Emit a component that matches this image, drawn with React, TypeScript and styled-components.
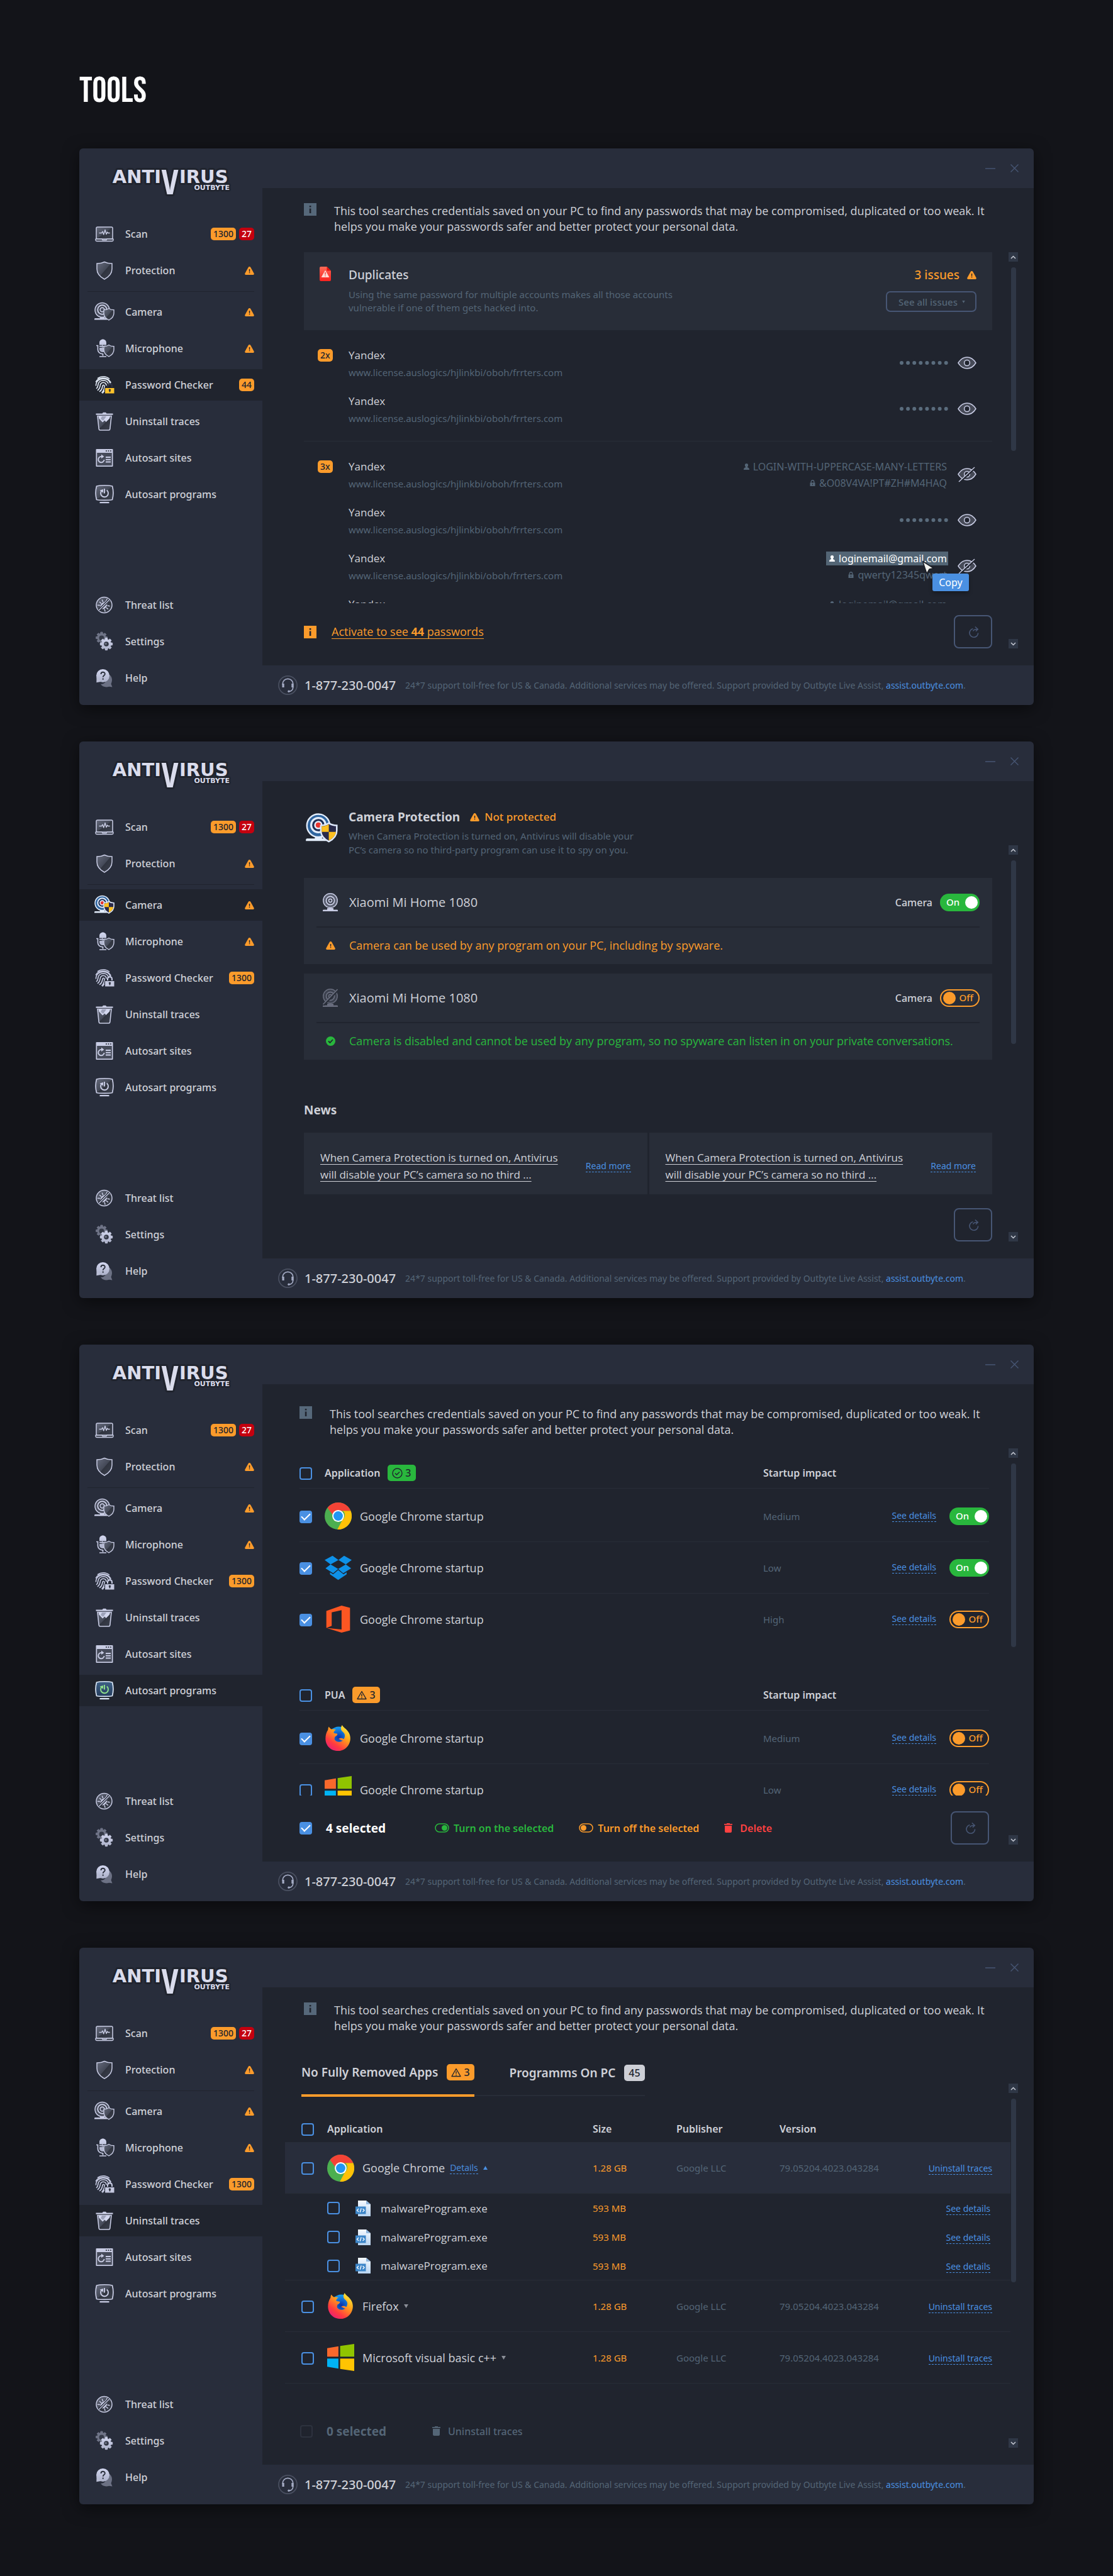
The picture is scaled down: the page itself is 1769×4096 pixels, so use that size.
import React, { useState } from "react";
import styled, { createGlobalStyle, css } from "styled-components";

const color = {
  page: "#131419",
  panel: "#282d3b",
  card: "#282d38",
  deep: "#20242e",
  text: "#cfd1d8",
  muted: "#546576",
  outline: "#475674",
  blue: "#4a90e2",
  orange: "#fb9b2b",
  green: "#29b73d",
  red: "#ff4141",
  light: "#c8cce4",
  scroll: "#2f3746",
};

const openSans = `"Open Sans", "Noto Sans", sans-serif`;

const GlobalStyle = createGlobalStyle`
  * { box-sizing: border-box; }
  body { margin: 0; background: ${color.page}; }
  button, input, table { font: inherit; color: inherit; }
  a { color: inherit; text-decoration: none; }
  svg { display: block; flex: none; }
`;

/* ---------- page and window frame ---------- */

const Page = styled.main`
  padding: 115px 126px 114px;
  color: ${color.text};
  font-family: "Noto Sans", "Open Sans", sans-serif;
  font-size: 16px;
`;

const PageTitle = styled.h1`
  margin: 0 0 61px;
  font: 400 57px/60px "Bebas Neue", "Open Sans Condensed", "Roboto Condensed", sans-serif;
  color: #fff;
`;

const WindowList = styled.div`
  display: flex;
  flex-direction: column;
  gap: 74px;
`;

const WindowPair = styled.div`
  display: flex;
  flex-direction: column;
  gap: 58px;
`;

const AppWindow = styled.section`
  display: grid;
  grid-template-columns: 291px minmax(0, 1fr);
  min-height: 885px;
  border-radius: 6px;
  overflow: hidden;
  background: ${color.panel};
  box-shadow: 0 6px 26px rgba(0, 0, 0, 0.5);
`;

const Sidebar = styled.aside`
  display: flex;
  flex-direction: column;
  padding-bottom: 18px;
`;

const LogoBox = styled.div`
  height: 111px;
  padding: 30px 0 0 46px;
`;

const Nav = styled.nav<{ $bottom?: boolean }>`
  display: flex;
  flex-direction: column;
  gap: 8px;
  margin-top: ${(p) => (p.$bottom ? "auto" : "0")};
`;

const NavLink = styled.a<{ $active: boolean }>`
  display: grid;
  grid-template-columns: 36px 1fr auto;
  column-gap: 15px;
  align-items: center;
  height: 50px;
  padding: 0 13px 0 22px;
  font-size: 16px;
  font-weight: 500;
  background: ${(p) => (p.$active ? color.deep : "transparent")};
`;

const NavRule = styled.hr`
  width: calc(100% - 26px);
  height: 1px;
  margin: 0 13px -1px;
  border: 0;
  background: ${color.deep};
`;

const BadgeRow = styled.span`
  display: flex;
  gap: 5px;
`;

const Badge = styled.span<{ $tone?: "orange" | "red" | "green" | "grey"; $large?: boolean }>`
  display: inline-flex;
  align-items: center;
  gap: 4px;
  height: ${(p) => (p.$large ? 26 : 20)}px;
  padding: 0 ${(p) => (p.$large ? 7 : 4)}px;
  border-radius: 5px;
  font-size: ${(p) => (p.$large ? 16 : 14)}px;
  font-weight: 500;
  line-height: 1;
  color: ${(p) => (p.$tone === "red" ? "#fff" : color.deep)};
  background: ${(p) =>
    ({ orange: color.orange, red: "#c4000f", green: color.green, grey: "#cdcfd6" })[p.$tone ?? "orange"]};
`;

const Main = styled.div`
  display: grid;
  grid-template-rows: 63px 1fr 63px;
`;

const TitleBar = styled.header`
  display: flex;
  justify-content: flex-end;
  align-items: center;
  gap: 18px;
  padding-right: 21px;
`;

const PlainButton = styled.button`
  display: inline-flex;
  align-items: center;
  padding: 0;
  border: 0;
  background: none;
  cursor: pointer;
`;

const TitleButton = styled(PlainButton)`
  width: 20px;
  height: 20px;
  justify-content: center;
`;

const Body = styled.div<{ $top?: number; $left?: number; $right?: number }>`
  display: flex;
  gap: ${(p) => (p.$right ?? 66) - 40}px;
  padding: ${(p) => p.$top ?? 24}px 25px 27px ${(p) => p.$left ?? 66}px;
  background: ${color.deep};
`;

const Column = styled.div`
  display: flex;
  flex-direction: column;
  flex: 1;
  min-width: 0;
`;

const Footer = styled.footer`
  display: flex;
  align-items: center;
  padding-left: 25px;
  font-size: 14px;
  color: ${color.muted};
`;

const Phone = styled.strong`
  margin: 0 15px 0 11px;
  font-size: 20px;
  font-weight: 500;
  color: ${color.text};
`;

const FooterLink = styled.a`
  color: ${color.blue};
`;

/* ---------- scrollbar ---------- */

const Scroll = styled.div<{ $top: number }>`
  display: flex;
  flex-direction: column;
  align-items: center;
  width: 15px;
  margin-top: ${(p) => p.$top}px;
`;

const ScrollButton = styled(PlainButton)`
  width: 15px;
  height: 15px;
  justify-content: center;
  background: ${color.scroll};
`;

const Thumb = styled.div`
  width: 8px;
  height: 292px;
  margin: 9px 0 auto;
  border-radius: 4px;
  background: ${color.scroll};
`;

/* ---------- shared content parts ---------- */

const InfoRow = styled.div<{ $gap: number }>`
  display: flex;
  align-items: flex-start;
  gap: 28px;
  margin-bottom: ${(p) => p.$gap}px;
`;

const InfoText = styled.p`
  flex: 1;
  margin: 0;
  font-family: ${openSans};
  font-size: 18px;
  line-height: 25px;
`;

const Viewport = styled.div<{ $height: number }>`
  height: ${(p) => p.$height}px;
  overflow: hidden;
`;

const BottomBar = styled.div<{ $outdent?: boolean }>`
  display: flex;
  align-items: center;
  height: 53px;
  margin-top: auto;
  margin-left: ${(p) => (p.$outdent ? "-6px" : "0")};
`;

const RefreshButton = styled(PlainButton)`
  width: 61px;
  height: 53px;
  margin-left: auto;
  justify-content: center;
  border: 2px solid ${color.outline};
  border-radius: 8px;
`;

const DashedLink = styled.a`
  display: inline-block;
  font-size: 14px;
  line-height: 18px;
  white-space: nowrap;
  color: ${color.blue};
  border-bottom: 1px dashed ${color.blue};
`;

const Check = styled.input`
  appearance: none;
  display: inline-grid;
  place-items: center;
  flex: none;
  width: 20px;
  height: 20px;
  margin: 0;
  border: 2px solid ${color.blue};
  border-radius: 4px;
  vertical-align: middle;

  &:checked {
    background: ${color.blue};
  }
  &:checked::after {
    content: "";
    width: 12px;
    height: 6px;
    margin-bottom: 4px;
    border: solid #fff;
    border-width: 0 0 2px 2px;
    rotate: -45deg;
  }
  &:disabled {
    border-color: #2d323e;
  }
`;

const SwitchLabel = styled.label`
  position: relative;
  display: inline-flex;
  align-items: center;
  gap: 12px;
  font-weight: 500;
`;

const HiddenInput = styled.input`
  position: absolute;
  right: 0;
  width: 63px;
  height: 28px;
  margin: 0;
  opacity: 0;
`;

const Track = styled.span<{ $on: boolean }>`
  display: inline-flex;
  align-items: center;
  justify-content: space-between;
  width: 63px;
  height: 28px;
  padding: 0 3px 0 10px;
  border-radius: 14px;
  font-size: 15px;
  font-weight: 500;
  line-height: 1;
  ${(p) =>
    p.$on
      ? css`
          color: #fff;
          background: ${color.green};
        `
      : css`
          flex-direction: row-reverse;
          padding: 0 8px 0 3px;
          color: ${color.orange};
          border: 2px solid ${color.orange};
        `}
`;

const Knob = styled.span`
  width: 20px;
  height: 20px;
  border-radius: 50%;
  background: currentColor;
`;

/* ---------- password checker ---------- */

const SummaryCard = styled.section`
  display: flex;
  height: 124px;
  padding: 23px 25px 0;
  background: ${color.card};
`;

const SummaryText = styled.div`
  flex: 1;
  margin-left: 28px;
`;

const SummaryTitle = styled.h2`
  margin: 0 0 8px;
  font-size: 19px;
  font-weight: 500;
  line-height: 26px;
`;

const Description = styled.p`
  max-width: 560px;
  margin: 0;
  font-size: 15px;
  line-height: 21px;
  color: ${color.muted};
`;

const SummarySide = styled.div`
  display: flex;
  flex-direction: column;
  align-items: flex-end;
  gap: 13px;
`;

const IssueCount = styled.div`
  display: flex;
  align-items: center;
  gap: 12px;
  font-size: 19px;
  font-weight: 500;
  line-height: 26px;
  color: ${color.orange};
`;

const OutlineButton = styled(PlainButton)`
  gap: 7px;
  height: 33px;
  padding: 0 16px 0 18px;
  border: 2px solid ${color.outline};
  border-radius: 7px;
  font-size: 15px;
  font-weight: 500;
  color: ${color.muted};
`;

const AccountGroup = styled.ul`
  display: flex;
  flex-direction: column;
  gap: 24px;
  margin: 0;
  padding: 28px 25px 26px 22px;
  list-style: none;

  & + & {
    border-top: 1px solid ${color.card};
  }
`;

const Account = styled.li`
  display: grid;
  grid-template-columns: 49px 1fr auto 30px;
  align-items: center;
  height: 49px;
`;

const AccountBadge = styled.span`
  align-self: start;
  padding-top: 2px;
  line-height: 0;
`;

const AccountName = styled.div`
  font-family: ${openSans};
  font-size: 17px;
  line-height: 24px;
`;

const AccountUrl = styled.div`
  margin-top: 5px;
  font-size: 15px;
  line-height: 20px;
  color: ${color.muted};
`;

const Credentials = styled.div`
  display: flex;
  flex-direction: column;
  align-items: flex-end;
  gap: 4px;
  margin-right: 15px;
  font-size: 16px;
  color: ${color.muted};
`;

const Credential = styled.span<{ $selected?: boolean }>`
  position: relative;
  display: flex;
  align-items: center;
  gap: 6px;
  height: 22px;
  padding: 0 2px 0 5px;
  color: ${(p) => (p.$selected ? "#fff" : "inherit")};
  background: ${(p) => (p.$selected ? "#536575" : "none")};
`;

const Pointer = styled.span`
  position: absolute;
  top: 14px;
  right: 21px;
  z-index: 2;
`;

const Tooltip = styled.span`
  position: absolute;
  top: 35px;
  right: -33px;
  z-index: 1;
  width: 58px;
  border-radius: 3px;
  font-size: 16px;
  line-height: 28px;
  text-align: center;
  color: #fff;
  background: ${color.blue};
  box-shadow: 0 3px 6px rgba(0, 0, 0, 0.3);
`;

const ActivateLink = styled.a`
  margin-left: 24px;
  font-family: ${openSans};
  font-size: 18px;
  line-height: 22px;
  color: ${color.orange};
  border-bottom: 1px solid ${color.orange};
`;

/* ---------- camera ---------- */

const CameraHead = styled.div`
  display: flex;
  gap: 14px;
  margin-bottom: 34px;
`;

const CameraIconBox = styled.div`
  width: 57px;
  padding-top: 3px;
`;

const HeadLine = styled.div`
  display: flex;
  align-items: center;
  gap: 16px;
  margin-bottom: 6px;
`;

const HeadTitle = styled.h2`
  margin: 0;
  font-size: 19px;
  font-weight: 700;
  line-height: 26px;
`;

const HeadStatus = styled.span`
  display: flex;
  align-items: center;
  gap: 8px;
  font-size: 17px;
  font-weight: 500;
  line-height: 26px;
  color: ${color.orange};
`;

const HeadText = styled(Description)`
  max-width: 470px;
  line-height: 22px;
`;

const DeviceCard = styled.section`
  padding: 0 20px;
  background: ${color.card};

  & + & {
    margin-top: 15px;
  }
`;

const DeviceRow = styled.div<{ $tone?: string }>`
  display: grid;
  grid-template-columns: 24px 1fr auto;
  column-gap: 18px;
  align-items: center;
  justify-items: start;
  height: ${(p) => (p.$tone ? 60 : 77)}px;
  padding-left: 10px;
  padding-bottom: ${(p) => (p.$tone ? "2px" : "0")};
  font-family: ${openSans};
  font-size: 18px;
  color: ${(p) => p.$tone ?? color.text};
  border-top: ${(p) => (p.$tone ? `2px solid ${color.deep}` : "0")};
`;

const DeviceIcon = styled.span`
  justify-self: center;
`;

const DeviceName = styled.h3`
  margin: 0;
  font-size: 20px;
  font-weight: 400;
`;

const DeviceSwitch = styled.div`
  font-family: "Noto Sans", "Open Sans", sans-serif;
  font-size: 16px;
`;

const NewsTitle = styled.h2`
  margin: 67px 0 23px;
  font-size: 19px;
  font-weight: 700;
  line-height: 26px;
`;

const NewsGrid = styled.div`
  display: grid;
  grid-template-columns: 1fr 1fr;
  gap: 3px;
`;

const NewsCard = styled.article`
  display: flex;
  align-items: center;
  justify-content: space-between;
  padding: 26px 26px 18px;
  background: ${color.card};
`;

const NewsText = styled.a`
  max-width: 390px;
  font-family: ${openSans};
  font-size: 17px;
  line-height: 27px;
  text-decoration: underline;
  text-decoration-thickness: 1px;
  text-underline-offset: 4px;
`;

/* ---------- tables ---------- */

const Table = styled.table`
  width: 100%;
  table-layout: fixed;
  border-spacing: 0;
  text-align: left;

  & + & {
    margin-top: 55px;
  }
  th {
    height: 49px;
    padding: 0;
    font-weight: 600;
    border-bottom: 1px solid #282d38;
  }
  td {
    height: 82px;
    padding: 0;
    border-bottom: 1px solid #282d38;
  }
`;

const StartupTable = styled(Table)`
  tbody tr:first-child td {
    height: 85px;
    padding-top: 3px;
  }
  tbody tr:last-child td {
    border-bottom-color: transparent;
  }
`;

const TraceTable = styled(Table)`
  th {
    height: 43px;
  }
  th:first-child,
  td:first-child {
    padding-left: 26px;
  }
  td:last-child {
    padding-right: 29px;
    text-align: right;
  }
`;

const TraceWrap = styled.div`
  margin: 30px -29px 0 -30px;
`;

const TraceRow = styled.tr<{ $kind?: "open" | "child" | "lastChild" }>`
  td {
    ${(p) => p.$kind === "open" && `height: 81px; background: ${color.panel};`}
    ${(p) => (p.$kind === "child" || p.$kind === "lastChild") && "height: 46px;"}
    ${(p) => p.$kind === "child" && "border-bottom: 0;"}
  }
  td:last-child {
    ${(p) => (p.$kind === "child" || p.$kind === "lastChild") && "padding-right: 32px;"}
  }
`;

const Col = styled.col<{ $w?: number }>`
  width: ${(p) => (p.$w ? `${p.$w}px` : "auto")};
`;

const HeadCell = styled.span`
  display: flex;
  align-items: center;
  gap: 12px;
`;

const AppCell = styled.span<{ $gap?: number }>`
  display: flex;
  align-items: center;
  gap: ${(p) => p.$gap ?? 13}px;
  font-family: ${openSans};
  font-size: 18px;
`;

const ChildName = styled(AppCell)`
  font-size: 17px;
`;

const NameGroup = styled.span`
  display: flex;
  align-items: center;
  gap: 8px;
`;

const DetailCell = styled.td<{ $tone?: string }>`
  font-size: 15px;
  color: ${(p) => p.$tone ?? color.muted};
`;

const Actions = styled.span`
  display: flex;
  align-items: center;
  justify-content: flex-end;
  gap: 21px;
`;

const SelectedCount = styled.label<{ $muted?: boolean }>`
  display: flex;
  align-items: center;
  gap: 22px;
  width: ${(p) => (p.$muted ? 210 : 175)}px;
  font-size: 19px;
  font-weight: 700;
  color: ${(p) => (p.$muted ? color.muted : "#fff")};
`;

const ActionGroup = styled.div`
  display: flex;
  gap: 40px;
  padding-left: 40px;
`;

const BulkAction = styled(PlainButton)<{ $tone: string; $wide?: boolean }>`
  gap: ${(p) => (p.$wide ? 12 : 7)}px;
  font-size: 16px;
  font-weight: 600;
  color: ${(p) => p.$tone};
`;

const MutedAction = styled(BulkAction)`
  font-weight: 500;
`;

const Tabs = styled.div`
  display: flex;
  align-items: flex-start;
  margin-left: -4px;
`;

const Tab = styled(PlainButton)<{ $active?: boolean }>`
  gap: 14px;
  height: ${(p) => (p.$active ? 52 : 51)}px;
  padding: 0 0 22px ${(p) => (p.$active ? 0 : 56)}px;
  border-bottom: ${(p) => (p.$active ? `4px solid ${color.orange}` : `2px solid ${color.card}`)};
  font-size: 19px;
  font-weight: 600;
`;

/* ---------- icons ---------- */

const HiddenDefs = styled.svg`
  position: absolute;
  width: 0;
  height: 0;
`;

function Gradients() {
  return (
    <HiddenDefs aria-hidden="true">
      <defs>
        <linearGradient id="glass" x1="0" y1="0" x2="1" y2="1">
          <stop offset="0" stopColor="#666b7d" />
          <stop offset="0.5" stopColor="#444957" />
          <stop offset="0.52" stopColor="#30343f" />
          <stop offset="1" stopColor="#3d424f" />
        </linearGradient>
        <linearGradient id="silver" x1="0" y1="0" x2="0" y2="1">
          <stop offset="0" stopColor="#d3d7f0" />
          <stop offset="1" stopColor="#abb0c8" />
        </linearGradient>
        <linearGradient id="blueGlass" x1="0" y1="0" x2="0" y2="1">
          <stop offset="0" stopColor="#3f6187" />
          <stop offset="1" stopColor="#243c5c" />
        </linearGradient>
        <linearGradient id="redDoc" x1="0" y1="0" x2="0" y2="1">
          <stop offset="0" stopColor="#ff6b57" />
          <stop offset="1" stopColor="#f9221f" />
        </linearGradient>
        <linearGradient id="page" x1="0" y1="0" x2="0" y2="1">
          <stop offset="0" stopColor="#f4f9ff" />
          <stop offset="1" stopColor="#b9d4f0" />
        </linearGradient>
        <linearGradient id="fox" x1="0.8" y1="0" x2="0.1" y2="1">
          <stop offset="0" stopColor="#fff13d" />
          <stop offset="0.35" stopColor="#ffa21a" />
          <stop offset="0.7" stopColor="#ff3b3f" />
          <stop offset="1" stopColor="#e31587" />
        </linearGradient>
        <radialGradient id="globe">
          <stop offset="0" stopColor="#0a2fa8" />
          <stop offset="1" stopColor="#15a0f5" />
        </radialGradient>
      </defs>
    </HiddenDefs>
  );
}

const Logo = () => (
  <svg width="204" height="66" viewBox="-5 -5 204 66" overflow="visible" role="img" aria-label="Antivirus Outbyte">
    <g fill="#dadcec" stroke={color.deep} strokeWidth="6" strokeLinejoin="round" paintOrder="stroke" fontWeight="700">
      <text x="188" y="31" textAnchor="end" fontFamily="DejaVu Sans, sans-serif" fontSize="11" strokeWidth="5">OUTBYTE</text>
      <text x="79" y="20" textAnchor="end" fontFamily="DejaVu Sans, sans-serif" fontSize="29">ANTI</text>
      <text x="108" y="20" fontFamily="DejaVu Sans, sans-serif" fontSize="29">IRUS</text>
      <text x="93" y="38" textAnchor="middle" fontFamily="Open Sans Condensed, Roboto Condensed, sans-serif" fontSize="53">V</text>
    </g>
  </svg>
);

const Warn = ({ size = 15 }: { size?: number }) => (
  <svg width={size} height={size} viewBox="0 0 16 16" aria-hidden="true">
    <path d="M8 1c.9 0 1.500.500 1.900 1.200l5.600 10c.7 1.300 0 2.600-1.500 2.600H2c-1.500 0-2.200-1.300-1.500-2.600l5.600-10C6.500 1.500 7.100 1 8 1z" fill={color.orange} />
    <path d="M7.200 5.200h1.700l-.2 4.300H7.400zM7.300 10.500h1.500v1.600H7.300z" fill={color.deep} />
  </svg>
);

const WarnOutline = () => (
  <svg width="16" height="15" viewBox="0 0 16 15" fill="none" stroke={color.deep} strokeWidth="1.400" strokeLinejoin="round" aria-hidden="true">
    <path d="M8 1.500 15 13.500H1zM8 5.500v4M8 10.800v1.400" />
  </svg>
);

const CheckRing = () => (
  <svg width="17" height="17" viewBox="0 0 17 17" fill="none" stroke={color.deep} strokeWidth="1.400" aria-hidden="true">
    <circle cx="8.500" cy="8.500" r="7.500" />
    <path d="m5 8.500 2.500 2.500L12 6.500" />
  </svg>
);

const InfoMark = ({ tone }: { tone: string }) => (
  <svg width="20" height="20" viewBox="0 0 20 20" aria-hidden="true">
    <path fill={tone} d="M0 0h20v20H0z" />
    <path fill={color.deep} d="M8.800 4h2.600v2.600H8.800zM8.800 8.400h2.600V16H8.800z" />
  </svg>
);

const smallShield = "M25 12.500c2.500 1.800 5 2.300 8 2.300v5.200c0 5-3.200 8.500-8 11-4.800-2.500-8-6-8-11v-5.200c3 0 5.500-.5 8-2.300z";

const SmallShield = ({ active }: { active?: boolean }) =>
  active ? (
    <>
      <path d={smallShield} fill="#2a2b4a" stroke="#dfe9fb" strokeWidth="1.600" />
      <path d="M25 13.500v7.800h-7.200v-5.600c2.800-.1 5-.7 7.200-2.200zM25 21.300h7.200c-.5 3.700-3 6.500-7.200 8.700z" fill="#fdc021" />
    </>
  ) : (
    <path d={smallShield} fill="url(#glass)" stroke={color.light} strokeWidth="1.400" />
  );

function CameraIcon({ active, size = 36 }: { active?: boolean; size?: number }) {
  const ring = active ? "#e3edfb" : color.light;
  const disc = active ? "#2f659f" : "#4a4f5f";
  return (
    <svg width={size} height={size} viewBox="0 0 36 36" aria-hidden="true">
      <path d="M2 30.500v-1.300c0-1 1-1.200 2-1.200h7v-2.500h8l-1 2.500h3l1.500 2.500z" fill={ring} />
      <circle cx="14.500" cy="15" r="11.500" fill={disc} stroke={ring} strokeWidth="1.500" />
      <circle cx="14.500" cy="14.500" r="7.200" fill={active ? "#1e2f55" : "#343945"} stroke={ring} strokeWidth="2" />
      <circle cx="14.500" cy="14.500" r="3.400" fill={active ? "#e8352f" : "#4a4f5f"} stroke={ring} strokeWidth="1.600" />
      <SmallShield active={active} />
    </svg>
  );
}

const ScanIcon = () => (
  <svg width="36" height="36" viewBox="0 0 36 36" aria-hidden="true">
    <rect x="5" y="7" width="26" height="19" rx="2" fill="url(#glass)" stroke={color.light} strokeWidth="1.500" />
    <path d="M4 26h10l1 1.600h6l1-1.600h10v1.800q0 1.700-1.800 1.700H5.800Q4 29.500 4 27.800z" fill="#3b404d" stroke={color.light} strokeWidth="1.400" strokeLinejoin="round" />
    <path d="M9.500 16.500h4l1.500-2.500 1.800 5 2.200-7.500 2 7 1.500-3.500 1.200 1.500h3" fill="none" stroke={color.light} strokeWidth="1.400" strokeLinejoin="round" />
  </svg>
);

const ShieldIcon = () => (
  <svg width="36" height="36" viewBox="0 0 36 36" aria-hidden="true">
    <path d="M18 4.500c4 2 8 2.600 12 2.600v8.400C30 23 25.500 28 18 32 10.500 28 6 23 6 15.500V7.100c4 0 8-.6 12-2.600z" fill="url(#glass)" stroke={color.light} strokeWidth="1.500" />
  </svg>
);

const MicIcon = () => (
  <svg width="36" height="36" viewBox="0 0 36 36" aria-hidden="true">
    <path d="M10 12.500V9c0-3.200 2.500-5.500 5.500-5.500S21 5.800 21 9v3.500h-6v1.200h6v2h-6V17h6v2.500c0 2.500-2.500 4.500-5.500 4.500S10 22 10 19.500V17h4v-1.300h-4v-2h4v-1.200z" fill="url(#silver)" />
    <path d="M5 13.500h2.500V20c0 4 3.500 6.800 8 6.800v3M10 31h11" fill="none" stroke={color.light} strokeWidth="1.700" />
    <SmallShield />
  </svg>
);

function PasswordIcon({ active }: { active?: boolean }) {
  return (
    <svg width="36" height="36" viewBox="0 0 36 36" fill="none" strokeLinecap="round" aria-hidden="true">
      <g stroke={active ? "#e4ecf8" : color.light} strokeWidth="1.600">
        <path d="M7.500 7.500C12.500 3.800 20 3.600 25.500 8" />
        <path d="M4.500 13C9 5.500 22.500 4.500 28 14" />
        <path d="M4.500 19c0-13.500 21-14.500 23-2.500" />
        <path d="M5.500 23.500C8 21 7.500 19.500 8 17c1.500-8 15-8.500 16.500.5" />
        <path d="M7.500 26.500c4-3 3.200-6 4-8.700 1.500-4.800 8.500-4.800 9.500.7" />
        <path d="M10.500 28.500c4.500-3 3.800-6 4.500-9 .6-1.800 3-1.500 3 .5 0 3.500-.5 7-4 10" />
        <path d="M17.500 27.500c-.8 1.500-1.500 2.500-2.500 3.500" />
      </g>
      <path d="M23 22.500v-2.800c0-4.500 7-4.500 7 0v2.800" stroke={active ? "#2e3344" : color.light} strokeWidth="2" />
      <path d="M19 22.500h15v9.500H19z" fill={active ? "#fcc32b" : "#c4c8df"} stroke={active ? color.deep : color.panel} strokeWidth="1" />
      <path d="M26.500 25.500v3M25.700 26h1.600" stroke="#262a37" strokeWidth="2" />
    </svg>
  );
}

const TrashIcon = () => (
  <svg width="36" height="36" viewBox="0 0 36 36" aria-hidden="true">
    <path d="M7 9.500h22l-2.200 20.700q-.2 1.800-2 1.800H11.200q-1.800 0-2-1.800z" fill="url(#glass)" stroke={color.light} strokeWidth="1.600" />
    <path d="M9 10h18l-1 3.500-5.500 5.500-2-2.500-3.500 3-6-6.500z" fill="#d3d7ee" />
    <path d="m14 10-2 4 4 3 5-7z" fill="#9ea3ba" />
    <path d="M4.500 5.500h10l1.500-1.700h4l1.500 1.700h10v2.300h-27z" fill={color.light} />
  </svg>
);

const SitesIcon = () => (
  <svg width="36" height="36" viewBox="0 0 36 36" aria-hidden="true">
    <rect x="4.500" y="4" width="27" height="28" rx="1" fill={color.light} />
    <path d="M6.200 10h23.600v20.300H6.200z" fill="#464b5a" />
    <circle cx="21" cy="7" r="1.100" fill="#2b303d" />
    <circle cx="24.500" cy="7" r="1.100" fill="#2b303d" />
    <circle cx="28" cy="7" r="1.100" fill="#2b303d" />
    <path d="M14.500 16.200A4.700 4.700 0 1 0 17.600 21M20 17h8M20 20.800h8M20 24.500h8" fill="none" stroke={color.light} strokeWidth="1.900" />
    <path d="m13 12.500 4.500 3.500-4.500 3z" fill={color.light} />
  </svg>
);

function ProgramsIcon({ active }: { active?: boolean }) {
  const line = active ? "#dbe7f7" : color.light;
  return (
    <svg width="36" height="36" viewBox="0 0 36 36" aria-hidden="true">
      <path d="M5.500 5c6-1.700 19-1.700 25 0 1.600 6 1.600 15.500 0 21.500-6 1.200-19 1.200-25 0C3.900 20.500 3.900 11 5.500 5z" fill={active ? "url(#blueGlass)" : "url(#glass)"} stroke={line} strokeWidth="1.700" strokeLinejoin="round" />
      <path d="M18 9v7.500M21.800 11.600a6 6 0 1 1-7.800.2" fill="none" stroke={active ? "#8fe08c" : line} strokeWidth="1.900" />
      <path d="m10.500 11.500 5.500-1.500v5.500z" fill={active ? "#8fe08c" : line} />
      <path d="M10.500 30h15v2.200h-15z" fill={line} />
    </svg>
  );
}

const ThreatIcon = () => (
  <svg width="36" height="36" viewBox="0 0 36 36" fill="none" aria-hidden="true">
    <circle cx="17.500" cy="18" r="12.500" fill="url(#glass)" stroke={color.light} strokeWidth="1.500" />
    <g transform="rotate(40 17.500 18)">
      <ellipse cx="17.500" cy="19" rx="4.600" ry="6.500" fill={color.light} />
      <circle cx="17.500" cy="12" r="2.700" fill={color.light} />
      <path d="M13 15.500 9.500 13.500M12.500 19H8.500M13 22.500 9.500 25M22 15.500l3.500-2M22.500 19h4M22 22.500l3.500 2.500M16 10l-1.500-2.500M19 10l1.500-2.500" stroke={color.light} strokeWidth="1.500" />
    </g>
    <path d="M9 26.500 26 9.500" stroke="#2b303d" strokeWidth="4" />
    <path d="M9 26.500 26 9.500" stroke={color.light} strokeWidth="1.300" />
  </svg>
);

function gearPath(cx: number, cy: number, outer: number, inner: number) {
  const points: string[] = [];
  for (let i = 0; i < 8; i += 1) {
    const base = (i * Math.PI) / 4;
    [
      [-0.26, inner],
      [-0.17, outer],
      [0.17, outer],
      [0.26, inner],
    ].forEach(([shift, radius]) => {
      points.push(`${(cx + Math.sin(base + shift) * radius).toFixed(2)} ${(cy - Math.cos(base + shift) * radius).toFixed(2)}`);
    });
  }
  return `M${points.join("L")}Z`;
}

const SettingsIcon = () => (
  <svg width="36" height="36" viewBox="0 0 36 36" strokeLinejoin="round" aria-hidden="true">
    <path d={gearPath(13.5, 12, 9, 6.8)} fill="#6f7487" stroke="#6f7487" />
    <circle cx="13.500" cy="12.500" r="4" fill="#353a48" />
    <path d={gearPath(21, 22, 9.8, 7.4)} fill="url(#silver)" stroke="#c3c7dd" />
    <circle cx="21" cy="22" r="3.800" fill="#333846" />
    <circle cx="20.200" cy="21.600" r="1.700" fill="#6f7487" />
  </svg>
);

const HelpIcon = () => (
  <svg width="36" height="36" viewBox="0 0 36 36" aria-hidden="true">
    <path d="M21 10.500c5.500 1 9 5.300 9 10.500 0 2.500-.7 4.700-1.500 6.500l2 5-5-.8c-5.500 1.800-11 .3-13.500-3.900 6.500.5 11.500-5 9-17.300z" fill="#6c7184" />
    <circle cx="15.500" cy="14.500" r="10.500" fill="url(#silver)" />
    <path d="m5.500 16-.2 9.300 7-1.300z" fill="#b9bdd4" />
    <path d="M12.500 12c0-4.200 6.300-4.200 6.300-.3 0 2.300-3.100 2.300-3.100 5M15.700 18.500v2.300" fill="none" stroke="#2b303d" strokeWidth="1.900" />
  </svg>
);

const Headset = () => (
  <svg width="31" height="31" viewBox="0 0 31 31" fill="none" aria-hidden="true">
    <circle cx="15.500" cy="15.500" r="14.600" stroke="#4b5162" strokeWidth="1.600" />
    <path d="M7.300 15v-1.500a8.200 8.200 0 0 1 16.400 0V19c0 4-3 6.300-6.500 6.300" stroke="#a4abc4" strokeWidth="1.700" />
    <path d="M6.500 13h3.200v6H6.500zM21.300 13h3.200v6h-3.200z" fill="#a4abc4" />
    <circle cx="17" cy="25.200" r="1.700" fill="#a4abc4" />
  </svg>
);

const RefreshIcon = () => (
  <svg width="20" height="20" viewBox="0 0 20 20" fill="none" stroke={color.outline} strokeWidth="1.600" aria-hidden="true">
    <path d="M9.500 4.800A6.800 6.800 0 1 0 17.600 11.500M9.500 8.500c1-2.300 3-3.400 7.500-3M12.800 1.500 17.200 5.500 14 8.800" />
  </svg>
);

const Chevron = ({ down }: { down?: boolean }) => (
  <svg width="9" height="6" viewBox="0 0 9 6" fill="none" stroke="#c6cad4" strokeWidth="1.500" aria-hidden="true">
    <path d={down ? "m1 1 3.500 3.500L8 1" : "m1 5 3.500-3.500L8 5"} />
  </svg>
);

const Caret = ({ up, small, tone = "#8b8f98" }: { up?: boolean; small?: boolean; tone?: string }) => (
  <svg width={small ? 5 : 7} height={small ? 4 : 6} viewBox="0 0 8 7" aria-hidden="true">
    <path d={up ? "M4 0 8 7H0z" : "M4 7 0 0h8z"} fill={tone} />
  </svg>
);

const Eye = ({ off }: { off?: boolean }) => (
  <svg width="30" height="36" viewBox="0 0 30 36" fill="none" aria-hidden="true">
    <path d="M1 17C5 10.500 10 8 15 8s10 2.500 14 9c-4 6.500-9 9-14 9S5 23.500 1 17z" fill="#464a57" stroke={color.light} strokeWidth="1.500" />
    <circle cx="15" cy="17" r="4.400" fill={color.deep} stroke={color.light} strokeWidth="1.500" />
    {off && (
      <>
        <path d="M3.500 29.500 28.500 6.500" stroke={color.deep} strokeWidth="3" />
        <path d="M2 29 27 6" stroke={color.light} strokeWidth="1.400" />
      </>
    )}
  </svg>
);

const MaskedPassword = () => (
  <svg width="77" height="8" viewBox="0 0 77 8" fill="#5a6c7d" role="img" aria-label="Hidden password">
    {[0, 1, 2, 3, 4, 5, 6, 7].map((n) => (
      <circle key={n} cx={3 + n * 10.1} cy="3" r="3" />
    ))}
  </svg>
);

const UserGlyph = () => (
  <svg width="9" height="10" viewBox="0 0 9 10" fill="currentColor" aria-hidden="true">
    <circle cx="4.500" cy="2.700" r="2.600" />
    <path d="M3 5h3v1.300c1.800.3 3 1 3 3.700H0c0-2.700 1.200-3.400 3-3.700z" />
  </svg>
);

const LockGlyph = () => (
  <svg width="9" height="10" viewBox="0 0 9 10" aria-hidden="true">
    <path d="M2.200 5V3c0-3 4.600-3 4.600 0v2" fill="none" stroke="currentColor" strokeWidth="1.300" />
    <path d="M.5 4.500h8V10h-8z" fill="currentColor" />
    <path d="M4 6.300h1v2H4z" fill={color.deep} />
  </svg>
);

const DuplicateIcon = () => (
  <svg width="18" height="23" viewBox="0 0 18 23" aria-hidden="true">
    <path d="M2 0h9.500L18 6.500V21q0 2-2 2H2q-2 0-2-2V2q0-2 2-2z" fill="url(#redDoc)" />
    <path d="M11.500 0 18 6.500h-6.500z" fill="#e3120f" />
    <path d="M9 6.500 14.700 16.500H3.300z" fill="#ffd9d2" stroke="#ffd9d2" strokeLinejoin="round" />
    <path d="M8.300 9h1.400l-.2 4h-1zM8.400 14h1.200v1.300H8.400z" fill="#e3302a" />
  </svg>
);

const CursorArrow = () => (
  <svg width="21" height="23" viewBox="0 0 21 23" aria-hidden="true">
    <path d="M1.500 1.500 19 12.500l-7 1.500-4 7z" fill="#f2f2ee" stroke="#1b1e26" strokeWidth="1.500" strokeLinejoin="round" />
  </svg>
);

const Webcam = ({ off }: { off?: boolean }) => (
  <svg width="24" height="29" viewBox="0 0 24 29" fill="none" opacity={off ? 0.4 : 1} aria-hidden="true">
    <path d="M0 29v-1.200Q0 26.500 1.500 26.500H7V24h10v2.500h5.500q1.500 0 1.500 1.300V29z" fill={color.light} />
    <circle cx="12" cy="12" r="11.200" fill="#5b6071" stroke={color.light} strokeWidth="1.400" />
    <circle cx="12" cy="12" r="6.500" fill="#3a3f4c" stroke={color.light} strokeWidth="1.800" />
    <circle cx="12" cy="12" r="2.600" stroke={color.light} strokeWidth="1.600" />
    {off && (
      <>
        <path d="M1.500 26 25 1.500" stroke={color.card} strokeWidth="3" />
        <path d="M.5 25 23.500 1" stroke={color.light} strokeWidth="1.600" />
      </>
    )}
  </svg>
);

const CheckDisc = () => (
  <svg width="15" height="15" viewBox="0 0 15 15" aria-hidden="true">
    <circle cx="7.500" cy="7.500" r="7.500" fill={color.green} />
    <path d="m4 7.500 2.500 2.500L11 5" fill="none" stroke={color.deep} strokeWidth="1.800" />
  </svg>
);

const Chrome = () => (
  <svg width="43" height="43" viewBox="0 0 48 48" aria-hidden="true">
    <circle cx="24" cy="24" r="24" fill="#4caf50" />
    <path d="M24 0a24 24 0 0 1 22.300 15H24a9.500 9.500 0 0 0-9 8L5 9.500A24 24 0 0 1 24 0z" fill="#f44336" />
    <path d="M46.300 15A24 24 0 0 1 22.500 48l9-17A11 11 0 0 0 33 15z" fill="#ffc107" />
    <path d="M33 14.500h13l.6 1.500H30z" fill="#e0a800" opacity="0.5" />
    <circle cx="24" cy="24" r="10.500" fill="#fff" />
    <circle cx="24" cy="24" r="8.300" fill="#2196f3" />
  </svg>
);

const Dropbox = () => (
  <svg width="43" height="43" viewBox="0 0 48 48" fill="#0e91e8" aria-hidden="true">
    <path d="M14 3 24.500 10.500 10.500 18.500 0 10.500zM34.500 3 48 10.500 37.500 18.500 24.500 10.500zM10.500 18.500 24 26.500 15 34 1.500 25.500zM37.500 18.500 47 25.500 33 34 24 26.500z" />
    <path d="m24 28.500 9.500 7.500 5.500-3.500V36L24 46 9.500 36v-3.500L15 36z" />
  </svg>
);

const Office = () => (
  <svg width="43" height="43" viewBox="0 0 48 48" aria-hidden="true">
    <path d="M3 9.500 30 0l15 4v40l-15 4L3 39.500l27 3V8L12.500 12v24L3 39.500z" fill="#fc5622" />
  </svg>
);

const Firefox = () => (
  <svg width="43" height="43" viewBox="0 0 48 48" aria-hidden="true">
    <circle cx="25" cy="23" r="19" fill="url(#globe)" />
    <path d="M31 1c2 4 6.500 6 10.500 11.500 4.500 6 5.500 14 2 21.500C40 42 32.500 47 24 47 11 47 1.500 37.500 1.500 25c0-6 1.500-11 4.500-15.500 0-2 .5-4 1.500-5.500 1 2 2.500 3.500 4.500 4.500 3-.5 5.500 0 8 1-2.500 1-4 3-4 5.500 1.500 1 4 1 6.500 1.500.5 2-1 3.500-4.500 5.500 0 2.500-1.500 3 .5 6 3.500 4.500 10 3.500 14 .5-4 0-5-2.500-8-2.500 3-2.500 7-2 9.500 0 3-4.500 2.500-9-1.500-12.500-4.500-4-4.500-8-1.500-12.500z" fill="url(#fox)" />
  </svg>
);

const WindowsLogo = () => (
  <svg width="43" height="43" viewBox="0 0 48 48" aria-hidden="true">
    <path d="M0 7.500 20 4.200V22.500H0z" fill="#f9682c" />
    <path d="M23 3.700 48 0v22.500H23z" fill="#90c400" />
    <path d="M0 26h20v17.800L0 40.500z" fill="#00b3f4" />
    <path d="M23 26h25v22l-25-3.700z" fill="#ffc402" />
  </svg>
);

const FileIcon = () => (
  <svg width="24" height="25" viewBox="0 0 24 25" aria-hidden="true">
    <path d="M4 0h13l7 6v19H4z" fill="url(#page)" />
    <path d="M17 0l7 6h-7z" fill="#8fb6dd" />
    <path d="M0 9.500h16.500v12H0z" fill="#3d86c9" />
    <path d="m5 13-2.500 2.500L5 18M11.500 13l2.500 2.500-2.500 2.500M9.200 12.300 7.300 18.700" fill="none" stroke="#fff" strokeWidth="1.300" />
  </svg>
);

const SwitchGlyph = ({ on }: { on?: boolean }) => (
  <svg width="23" height="15" viewBox="0 0 23 15" fill="none" aria-hidden="true">
    <rect x="1" y="1" width="21" height="13" rx="6.500" stroke="currentColor" strokeWidth="1.500" />
    <circle cx={on ? 15.5 : 7.5} cy="7.500" r="4.500" fill="currentColor" />
  </svg>
);

const BinGlyph = () => (
  <svg width="13" height="15" viewBox="0 0 13 15" fill="currentColor" aria-hidden="true">
    <path d="M4 0h5v1h4v1.800H0V1h4zM1 4h11v9q0 2-2 2H3q-2 0-2-2z" />
  </svg>
);

/* ---------- frame pieces ---------- */

type NavKey = "camera" | "password" | "uninstall" | "programs";

function Frame({ active, passwordCount, children }: { active: NavKey; passwordCount: number; children: React.ReactNode }) {
  return (
    <AppWindow>
      <Sidebar>
        <LogoBox>
          <Logo />
        </LogoBox>
        <Nav aria-label="Tools">
          <NavLink href="#" $active={false}>
            <ScanIcon />
            Scan
            <BadgeRow>
              <Badge>1300</Badge>
              <Badge $tone="red">27</Badge>
            </BadgeRow>
          </NavLink>
          <NavLink href="#" $active={false}>
            <ShieldIcon />
            Protection
            <Warn />
          </NavLink>
          <NavRule />
          <NavLink href="#" $active={active === "camera"}>
            <CameraIcon active={active === "camera"} />
            Camera
            <Warn />
          </NavLink>
          <NavLink href="#" $active={false}>
            <MicIcon />
            Microphone
            <Warn />
          </NavLink>
          <NavLink href="#" $active={active === "password"}>
            <PasswordIcon active={active === "password"} />
            Password Checker
            <Badge>{passwordCount}</Badge>
          </NavLink>
          <NavLink href="#" $active={active === "uninstall"}>
            <TrashIcon />
            Uninstall traces
          </NavLink>
          <NavLink href="#" $active={false}>
            <SitesIcon />
            Autosart sites
          </NavLink>
          <NavLink href="#" $active={active === "programs"}>
            <ProgramsIcon active={active === "programs"} />
            Autosart programs
          </NavLink>
        </Nav>
        <Nav $bottom aria-label="Service">
          <NavLink href="#" $active={false}>
            <ThreatIcon />
            Threat list
          </NavLink>
          <NavLink href="#" $active={false}>
            <SettingsIcon />
            Settings
          </NavLink>
          <NavLink href="#" $active={false}>
            <HelpIcon />
            Help
          </NavLink>
        </Nav>
      </Sidebar>
      <Main>
        <TitleBar>
          <TitleButton aria-label="Minimize">
            <svg width="16" height="2" viewBox="0 0 16 2" aria-hidden="true">
              <path d="M0 1h16" stroke={color.outline} strokeWidth="1.400" />
            </svg>
          </TitleButton>
          <TitleButton aria-label="Close">
            <svg width="13" height="13" viewBox="0 0 13 13" aria-hidden="true">
              <path d="m.5.5 12 12M12.500.5l-12 12" stroke={color.outline} strokeWidth="1.400" />
            </svg>
          </TitleButton>
        </TitleBar>
        {children}
        <Footer>
          <Headset />
          <Phone>1-877-230-0047</Phone>
          <span>
            24*7 support toll-free for US &amp; Canada. Additional services may be offered. Support provided by Outbyte
            Live Assist, <FooterLink href="#">assist.outbyte.com</FooterLink>.
          </span>
        </Footer>
      </Main>
    </AppWindow>
  );
}

const ScrollBar = ({ top }: { top: number }) => (
  <Scroll $top={top}>
    <ScrollButton aria-label="Scroll up">
      <Chevron />
    </ScrollButton>
    <Thumb />
    <ScrollButton aria-label="Scroll down">
      <Chevron down />
    </ScrollButton>
  </Scroll>
);

const ToolInfo = ({ gap }: { gap: number }) => (
  <InfoRow $gap={gap}>
    <InfoMark tone="#56687a" />
    <InfoText>
      This tool searches credentials saved on your PC to find any passwords that may be compromised, duplicated or too
      weak. It helps you make your passwords safer and better protect your personal data.
    </InfoText>
  </InfoRow>
);

const Refresh = () => (
  <RefreshButton aria-label="Refresh">
    <RefreshIcon />
  </RefreshButton>
);

function Switch({ initial, text, name }: { initial: boolean; text?: string; name: string }) {
  const [on, setOn] = useState(initial);
  return (
    <SwitchLabel>
      {text}
      <HiddenInput type="checkbox" aria-label={name} checked={on} onChange={() => setOn(!on)} />
      <Track $on={on}>
        {on ? "On" : "Off"}
        <Knob />
      </Track>
    </SwitchLabel>
  );
}

/* ---------- screens ---------- */

type Shown = { login: string; password: string; copied?: boolean };

function AccountRow({ count, shown }: { count?: string; shown?: Shown }) {
  return (
    <Account>
      <AccountBadge>{count && <Badge>{count}</Badge>}</AccountBadge>
      <div>
        <AccountName>Yandex</AccountName>
        <AccountUrl>www.license.auslogics/hjlinkbi/oboh/frrters.com</AccountUrl>
      </div>
      <Credentials>
        {shown ? (
          <>
            <Credential $selected={shown.copied}>
              <UserGlyph />
              {shown.login}
              {shown.copied && (
                <>
                  <Pointer>
                    <CursorArrow />
                  </Pointer>
                  <Tooltip role="tooltip">Copy</Tooltip>
                </>
              )}
            </Credential>
            <Credential>
              <LockGlyph />
              {shown.password}
            </Credential>
          </>
        ) : (
          <MaskedPassword />
        )}
      </Credentials>
      <PlainButton aria-label={shown ? "Hide password" : "Show password"}>
        <Eye off={!!shown} />
      </PlainButton>
    </Account>
  );
}

const PasswordChecker = () => (
  <Frame active="password" passwordCount={44}>
    <Body>
      <Column>
        <ToolInfo gap={28} />
        <Viewport $height={558}>
          <SummaryCard>
            <DuplicateIcon />
            <SummaryText>
              <SummaryTitle>Duplicates</SummaryTitle>
              <Description>
                Using the same password for multiple accounts makes all those accounts vulnerable if one of them gets
                hacked into.
              </Description>
            </SummaryText>
            <SummarySide>
              <IssueCount>
                3 issues
                <Warn />
              </IssueCount>
              <OutlineButton>
                See all issues
                <Caret small tone={color.muted} />
              </OutlineButton>
            </SummarySide>
          </SummaryCard>
          <AccountGroup>
            <AccountRow count="2x" />
            <AccountRow />
          </AccountGroup>
          <AccountGroup>
            <AccountRow count="3x" shown={{ login: "LOGIN-WITH-UPPERCASE-MANY-LETTERS", password: "&O08V4VA!PT#ZH#M4HAQ" }} />
            <AccountRow />
            <AccountRow shown={{ login: "loginemail@gmail.com", password: "qwerty12345qwert", copied: true }} />
            <AccountRow shown={{ login: "loginemail@gmail.com", password: "qwerty12345qwert" }} />
          </AccountGroup>
        </Viewport>
        <BottomBar>
          <InfoMark tone={color.orange} />
          <ActivateLink href="#">
            Activate to see <b>44</b> passwords
          </ActivateLink>
          <Refresh />
        </BottomBar>
      </Column>
      <ScrollBar top={78} />
    </Body>
  </Frame>
);

const Device = ({ protectedNow }: { protectedNow: boolean }) => (
  <DeviceCard>
    <DeviceRow>
      <Webcam off={protectedNow} />
      <DeviceName>Xiaomi Mi Home 1080</DeviceName>
      <DeviceSwitch>
        <Switch initial={!protectedNow} text="Camera" name="Camera" />
      </DeviceSwitch>
    </DeviceRow>
    <DeviceRow $tone={protectedNow ? color.green : color.orange}>
      <DeviceIcon>{protectedNow ? <CheckDisc /> : <Warn />}</DeviceIcon>
      {protectedNow
        ? "Camera is disabled and cannot be used by any program, so no spyware can listen in on your private conversations."
        : "Camera can be used by any program on your PC, including by spyware."}
    </DeviceRow>
  </DeviceCard>
);

const News = () => (
  <NewsCard>
    <NewsText href="#">When Camera Protection is turned on, Antivirus will disable your PC’s camera so no third ...</NewsText>
    <DashedLink href="#">Read more</DashedLink>
  </NewsCard>
);

const CameraProtection = () => (
  <Frame active="camera" passwordCount={1300}>
    <Body $top={44}>
      <Column>
        <CameraHead>
          <CameraIconBox>
            <CameraIcon active size={57} />
          </CameraIconBox>
          <div>
            <HeadLine>
              <HeadTitle>Camera Protection</HeadTitle>
              <HeadStatus>
                <Warn />
                Not protected
              </HeadStatus>
            </HeadLine>
            <HeadText>
              When Camera Protection is turned on, Antivirus will disable your PC’s camera so no third-party program can
              use it to spy on you.
            </HeadText>
          </div>
        </CameraHead>
        <Device protectedNow={false} />
        <Device protectedNow />
        <NewsTitle>News</NewsTitle>
        <NewsGrid>
          <News />
          <News />
        </NewsGrid>
        <BottomBar>
          <Refresh />
        </BottomBar>
      </Column>
      <ScrollBar top={58} />
    </Body>
  </Frame>
);

type Startup = { icon: React.ReactNode; impact: string; on: boolean; checked: boolean };

function StartupGroup({ title, badge, rows }: { title: string; badge: React.ReactNode; rows: Startup[] }) {
  return (
    <StartupTable>
      <colgroup>
        <Col $w={40} />
        <Col />
        <Col $w={150} />
        <Col $w={209} />
      </colgroup>
      <thead>
        <tr>
          <th>
            <Check type="checkbox" aria-label={`Select all in ${title}`} />
          </th>
          <th>
            <HeadCell>
              {title}
              {badge}
            </HeadCell>
          </th>
          <th>Startup impact</th>
          <th aria-label="Actions" />
        </tr>
      </thead>
      <tbody>
        {rows.map((row, index) => (
          <tr key={index}>
            <td>
              <Check type="checkbox" aria-label="Google Chrome startup" defaultChecked={row.checked} />
            </td>
            <td>
              <AppCell>
                {row.icon}
                Google Chrome startup
              </AppCell>
            </td>
            <DetailCell>{row.impact}</DetailCell>
            <td>
              <Actions>
                <DashedLink href="#">See details</DashedLink>
                <Switch initial={row.on} name="Run at startup" />
              </Actions>
            </td>
          </tr>
        ))}
      </tbody>
    </StartupTable>
  );
}

const AutostartPrograms = () => (
  <Frame active="programs" passwordCount={1300}>
    <Body $top={35} $left={59} $right={71}>
      <Column>
        <ToolInfo gap={32} />
        <Viewport $height={537}>
          <StartupGroup
            title="Application"
            badge={
              <Badge $tone="green" $large>
                <CheckRing />3
              </Badge>
            }
            rows={[
              { icon: <Chrome />, impact: "Medium", on: true, checked: true },
              { icon: <Dropbox />, impact: "Low", on: true, checked: true },
              { icon: <Office />, impact: "High", on: false, checked: true },
            ]}
          />
          <StartupGroup
            title="PUA"
            badge={
              <Badge $large>
                <WarnOutline />3
              </Badge>
            }
            rows={[
              { icon: <Firefox />, impact: "Medium", on: false, checked: true },
              { icon: <WindowsLogo />, impact: "Low", on: false, checked: false },
            ]}
          />
        </Viewport>
        <BottomBar>
          <SelectedCount>
            <Check type="checkbox" defaultChecked />4 selected
          </SelectedCount>
          <ActionGroup>
            <BulkAction $tone={color.green}>
              <SwitchGlyph on />
              Turn on the selected
            </BulkAction>
            <BulkAction $tone={color.orange}>
              <SwitchGlyph />
              Turn off the selected
            </BulkAction>
            <BulkAction $tone={color.red} $wide>
              <BinGlyph />
              Delete
            </BulkAction>
          </ActionGroup>
          <Refresh />
        </BottomBar>
      </Column>
      <ScrollBar top={67} />
    </Body>
  </Frame>
);

function TraceApp({ icon, name, open }: { icon: React.ReactNode; name: string; open?: boolean }) {
  return (
    <TraceRow $kind={open ? "open" : undefined}>
      <td>
        <Check type="checkbox" aria-label={name} />
      </td>
      <td>
        <AppCell>
          {icon}
          <NameGroup>
            {name}
            {open && <DashedLink href="#">Details</DashedLink>}
            <Caret up={open} tone={open ? color.blue : undefined} />
          </NameGroup>
        </AppCell>
      </td>
      <DetailCell $tone={color.orange}>1.28 GB</DetailCell>
      <DetailCell>Google LLC</DetailCell>
      <DetailCell>79.05204.4023.043284</DetailCell>
      <td>
        <DashedLink href="#">Uninstall traces</DashedLink>
      </td>
    </TraceRow>
  );
}

const TraceFile = ({ last }: { last?: boolean }) => (
  <TraceRow $kind={last ? "lastChild" : "child"}>
    <td />
    <td>
      <ChildName $gap={25}>
        <Check type="checkbox" aria-label="malwareProgram.exe" />
        <ChildName $gap={16}>
          <FileIcon />
          malwareProgram.exe
        </ChildName>
      </ChildName>
    </td>
    <DetailCell $tone={color.orange}>593 MB</DetailCell>
    <td />
    <td />
    <td>
      <DashedLink href="#">See details</DashedLink>
    </td>
  </TraceRow>
);

const UninstallTraces = () => (
  <Frame active="uninstall" passwordCount={1300}>
    <Body>
      <Column>
        <ToolInfo gap={48} />
        <Tabs role="tablist">
          <Tab role="tab" aria-selected="true" $active>
            No Fully Removed Apps
            <Badge $large>
              <WarnOutline />3
            </Badge>
          </Tab>
          <Tab role="tab" aria-selected="false">
            Programms On PC
            <Badge $tone="grey" $large>
              45
            </Badge>
          </Tab>
        </Tabs>
        <TraceWrap>
          <TraceTable>
            <colgroup>
              <Col $w={67} />
              <Col />
              <Col $w={133} />
              <Col $w={164} />
              <Col $w={200} />
              <Col $w={167} />
            </colgroup>
            <thead>
              <tr>
                <th>
                  <Check type="checkbox" aria-label="Select all applications" />
                </th>
                <th>Application</th>
                <th>Size</th>
                <th>Publisher</th>
                <th>Version</th>
                <th aria-label="Actions" />
              </tr>
            </thead>
            <tbody>
              <TraceApp icon={<Chrome />} name="Google Chrome" open />
              <TraceFile />
              <TraceFile />
              <TraceFile last />
              <TraceApp icon={<Firefox />} name="Firefox" />
              <TraceApp icon={<WindowsLogo />} name="Microsoft visual basic c++" />
            </tbody>
          </TraceTable>
        </TraceWrap>
        <BottomBar $outdent>
          <SelectedCount $muted>
            <Check type="checkbox" disabled />0 selected
          </SelectedCount>
          <MutedAction $tone={color.muted} $wide>
            <BinGlyph />
            Uninstall traces
          </MutedAction>
        </BottomBar>
      </Column>
      <ScrollBar top={129} />
    </Body>
  </Frame>
);

export default function App() {
  return (
    <>
      <GlobalStyle />
      <Gradients />
      <Page>
        <PageTitle>TOOLS</PageTitle>
        <WindowList>
          <WindowPair>
            <PasswordChecker />
            <CameraProtection />
          </WindowPair>
          <AutostartPrograms />
          <UninstallTraces />
        </WindowList>
      </Page>
    </>
  );
}
